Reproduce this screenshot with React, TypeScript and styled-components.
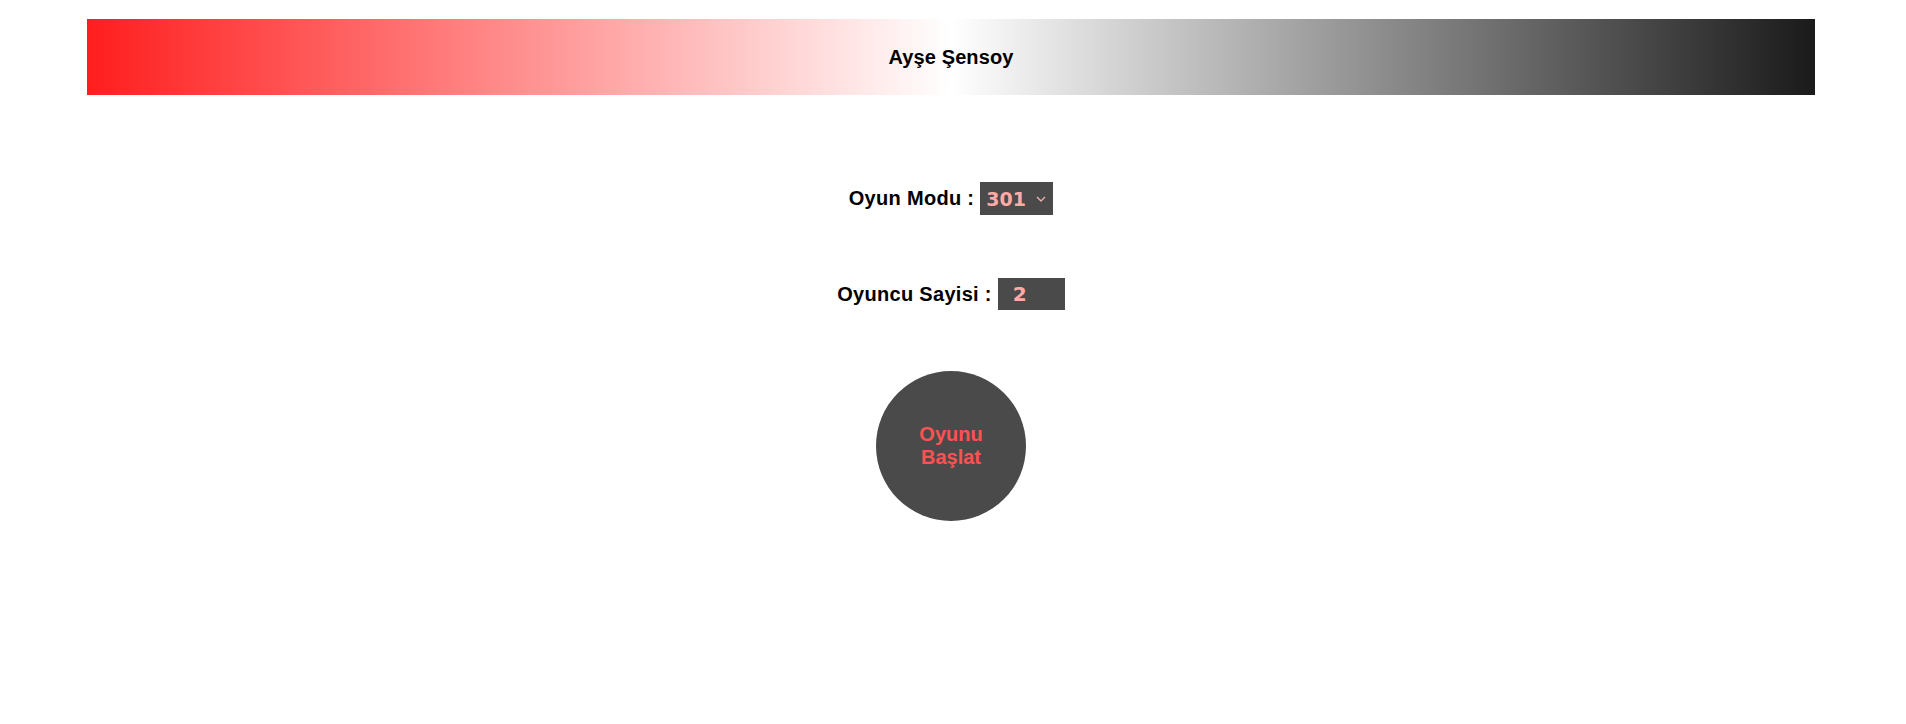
import React, { useState } from "react";
import styled, { createGlobalStyle } from "styled-components";

const GlobalStyle = createGlobalStyle`
  html, body {
    margin: 0;
    padding: 0;
    background: #ffffff;
    font-family: "Liberation Sans", Arial, sans-serif;
  }
`;

const Page = styled.div`
  display: flex;
  flex-direction: column;
  align-items: center;
  padding-top: 19px;
`;

const Header = styled.header`
  width: 1728px;
  height: 76px;
  margin-left: -4px;
  display: flex;
  align-items: center;
  justify-content: center;
  background: linear-gradient(to right, #ff1e1e, #ffffff, #1a1a1a);
`;

const Title = styled.h1`
  margin: 0;
  font-size: 20px;
  font-weight: 700;
  color: #000;
  line-height: 23px;
  letter-spacing: 0.1px;
`;

const Form = styled.div`
  display: flex;
  flex-direction: column;
  align-items: center;
  margin-top: 87px;
  margin-left: -4px;
`;

const Row = styled.div<{ $gap?: number }>`
  display: flex;
  align-items: center;
  gap: 6px;
  margin-bottom: ${(p) => p.$gap ?? 0}px;
`;

const Label = styled.label`
  font-size: 20px;
  font-weight: 700;
  line-height: 23px;
  letter-spacing: 0.3px;
  color: #000;
`;

const SelectWrap = styled.div`
  position: relative;
  display: flex;
`;

const Select = styled.select`
  appearance: none;
  -webkit-appearance: none;
  width: 73px;
  height: 33px;
  border: none;
  border-radius: 0;
  outline: none;
  padding: 0 0 0 6px;
  background: #4a4a4a;
  color: #ffaaa6;
  font-family: "DejaVu Sans", Verdana, sans-serif;
  font-weight: 700;
  font-size: 19px;
`;

const Chevron = styled.svg`
  position: absolute;
  right: 7px;
  top: 14px;
  pointer-events: none;
`;

const NumberInput = styled.input`
  width: 67px;
  height: 32px;
  box-sizing: border-box;
  border: none;
  border-radius: 0;
  outline: none;
  padding: 0 0 0 15px;
  background: #4a4a4a;
  color: #ffaaa6;
  font-family: "DejaVu Sans", Verdana, sans-serif;
  font-weight: 700;
  font-size: 20px;
`;

const StartButton = styled.button`
  width: 150px;
  height: 150px;
  border-radius: 50%;
  border: none;
  background: #4a4a4a;
  color: #ff5252;
  font-family: "Liberation Sans", Arial, sans-serif;
  font-weight: 700;
  font-size: 20px;
  line-height: 23px;
  padding: 0 30px;
  cursor: pointer;
`;

export default function App() {
  const [mode, setMode] = useState("301");
  const [players, setPlayers] = useState("2");
  return (
    <>
      <GlobalStyle />
      <Page>
        <Header>
          <Title>Ayşe Şensoy</Title>
        </Header>
        <Form>
          <Row $gap={63}>
            <Label>Oyun Modu :</Label>
            <SelectWrap>
              <Select value={mode} onChange={(e) => setMode(e.target.value)}>
                <option value="301">301</option>
                <option value="501">501</option>
                <option value="701">701</option>
              </Select>
              <Chevron width="10" height="6" viewBox="0 0 10 6">
                <path d="M1 1 L5 5 L9 1" fill="none" stroke="#eab0ac" strokeWidth="1.4" />
              </Chevron>
            </SelectWrap>
          </Row>
          <Row $gap={61}>
            <Label>Oyuncu Sayisi :</Label>
            <NumberInput
              type="text"
              value={players}
              onChange={(e) => setPlayers(e.target.value)}
            />
          </Row>
          <StartButton>Oyunu Başlat</StartButton>
        </Form>
      </Page>
    </>
  );
}
